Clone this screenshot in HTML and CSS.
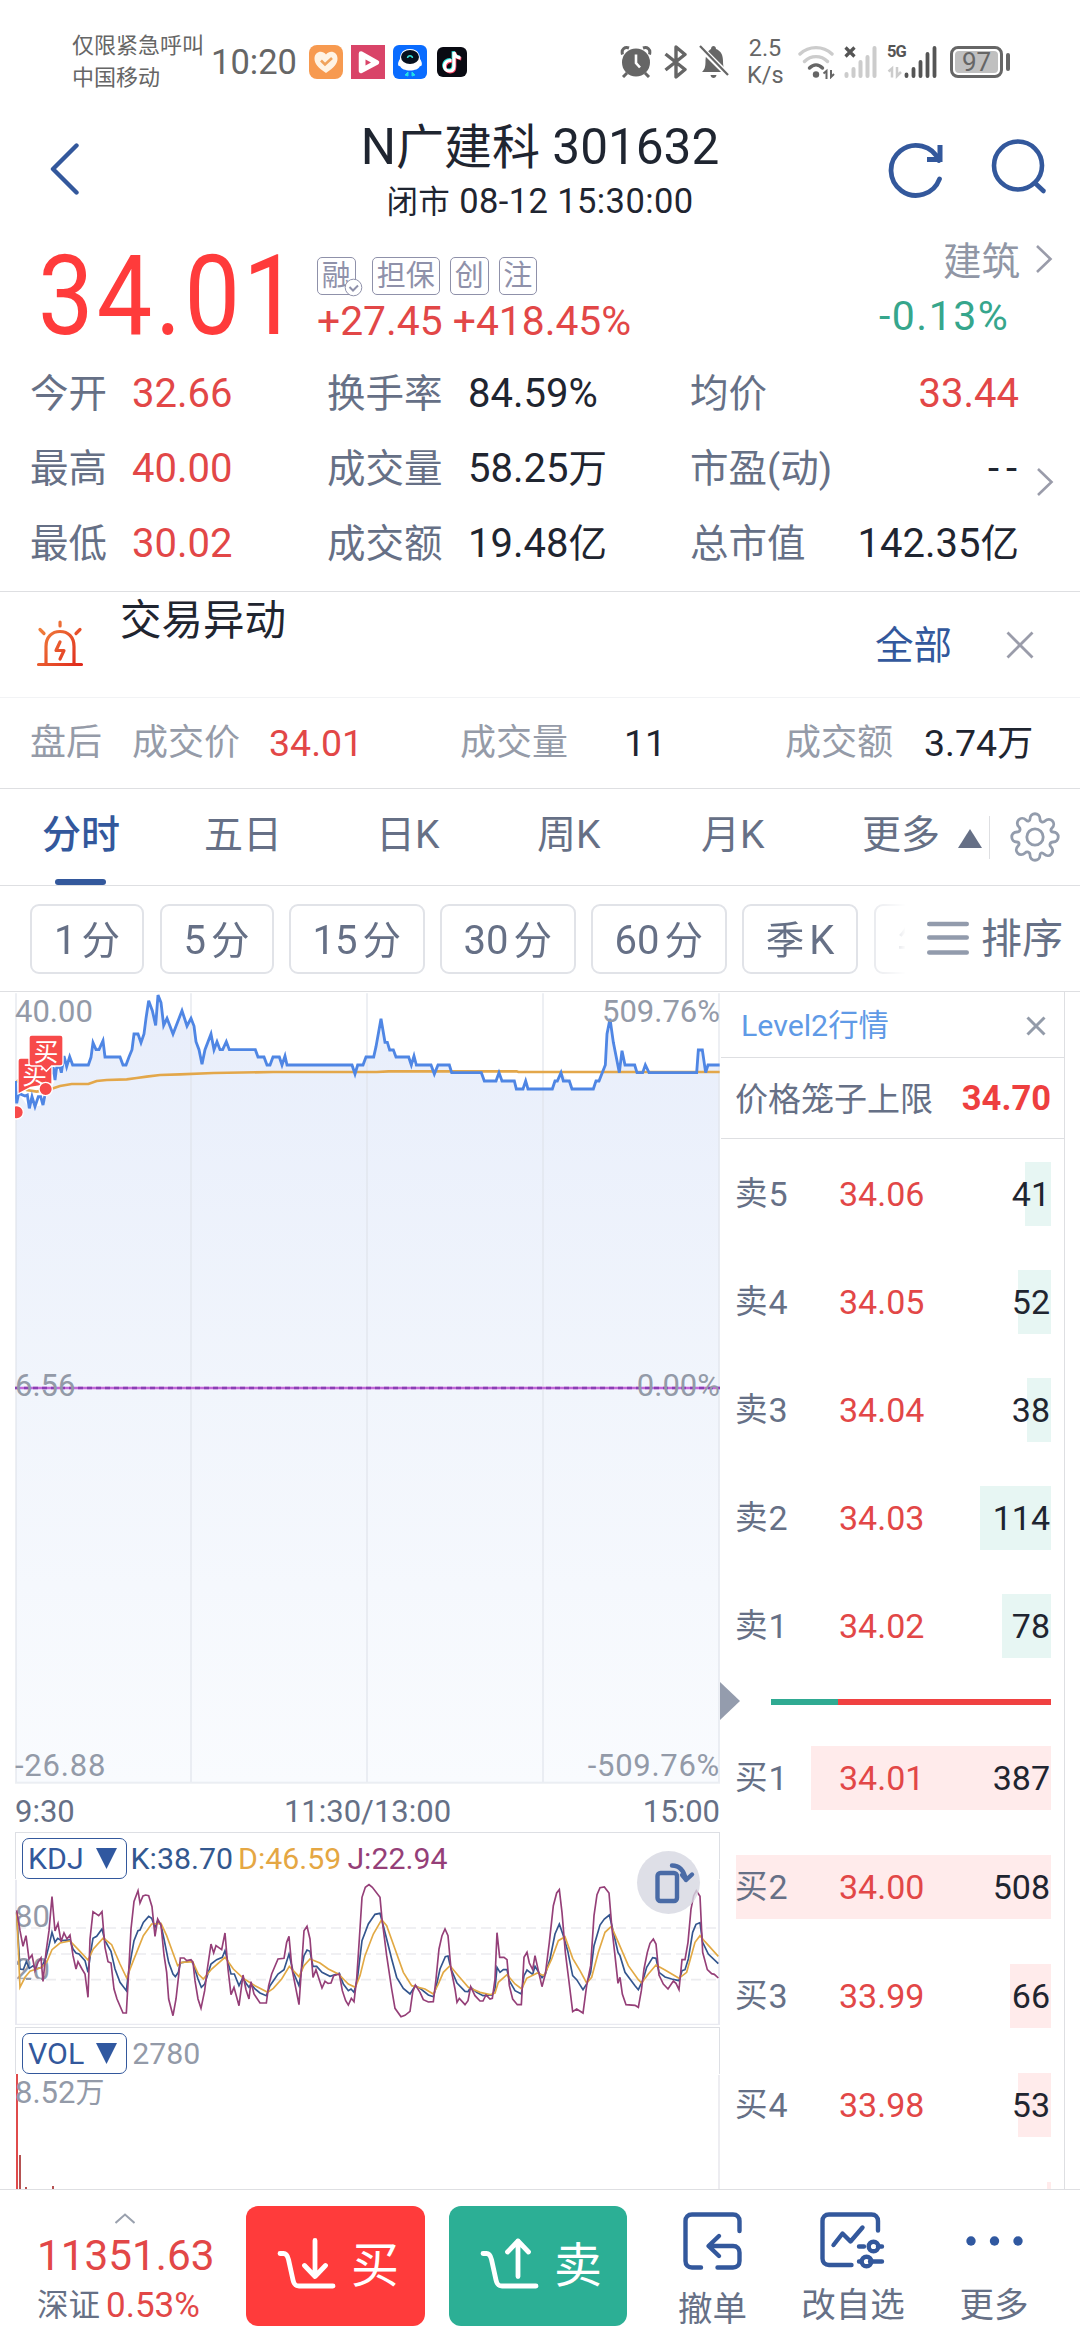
FILE: index.html
```html
<!DOCTYPE html>
<html lang="zh-CN">
<head>
<meta charset="utf-8">
<title>N广建科 301632</title>
<link rel="stylesheet" href="styles.css">
</head>
<body>
<div class="statusbar">
  <div class="carrier"><span>仅限紧急呼叫</span><span>中国移动</span></div>
  <div class="clock">10:20</div>
  <div class="apps">
    <svg width="34" height="34" viewBox="0 0 34 34"><rect width="34" height="34" rx="8" fill="#f79a50"/><path d="M17 28C9 22.500 5.500 19 5.500 13.500 5.500 7 13 4.500 17 9.500 21 4.500 28.500 7 28.500 13.500 28.500 19 25 22.500 17 28Z" fill="#fff3e4"/><path d="M12 15.500l4 4 7-6.500" fill="none" stroke="#f0a35c" stroke-width="2.600"/></svg>
    <svg width="34" height="34" viewBox="0 0 34 34"><rect width="34" height="34" fill="#d94468"/><path d="M10 8.500 26 17.500 10 26Z" fill="#fff" stroke="#fff" stroke-width="4.500" stroke-linejoin="round"/><path d="M14.500 14.500v6l5.500-3Z" fill="#d94468"/></svg>
    <svg width="34" height="34" viewBox="0 0 34 34"><rect width="34" height="34" rx="6" fill="#0a6cff"/><path d="M17 4C26 4 27 11 27 14c3 4 2 8 0 7-2 6-18 6-20 0-2 1-3-3 0-7 0-3 1-10 10-10Z" fill="#fff"/><ellipse cx="17" cy="12" rx="9" ry="7" fill="#06101f"/><path d="M14.500 13c.500-3 4.500-3 5 0" fill="none" stroke="#35e0d8" stroke-width="1.500"/><path d="M12 30l3-3v4zM22 30l-3-3v4z" fill="#20e0e8" stroke="#20e0e8"/></svg>
    <svg class="app-small" width="30" height="30" viewBox="0 0 30 30"><rect width="30" height="30" rx="6" fill="#090a12"/><g fill="none" stroke-width="3.200"><path d="M14.500 13.500c-9-.5-9 11-2 10.500 4 0 4.500-3 4.500-5V5c.5 3.500 3 5.500 6.500 6" stroke="#29e3e0" transform="translate(-.8 -.8)"/><path d="M14.500 13.500c-9-.5-9 11-2 10.500 4 0 4.500-3 4.500-5V5c.5 3.500 3 5.500 6.500 6" stroke="#f33a5a" transform="translate(.8 .8)"/><path d="M14.500 13.500c-9-.5-9 11-2 10.500 4 0 4.500-3 4.500-5V5c.5 3.500 3 5.500 6.500 6" stroke="#fff"/></g></svg>
  </div>
  <div class="indicators">
    <svg width="32" height="32" viewBox="0 0 32 32" fill="#666"><circle cx="16" cy="16.500" r="14"/><path d="M2.500 8.500C1 3 5 .5 9 2M29.500 8.500C31 3 27 .5 23 2M7 27l-4 4M25 27l4 4" stroke="#666" stroke-width="3" fill="none"/><path d="M16 8.500v8.500l4 4.500" fill="none" stroke="#fff" stroke-width="2.600"/></svg>
    <svg width="24" height="34" viewBox="0 0 24 34" fill="none" stroke="#666" stroke-width="3.400" stroke-linejoin="round"><path d="M1.500 9 21 24.500 12 32V2l9 7.500L1.500 25"/></svg>
    <svg width="30" height="34" viewBox="0 0 30 34" fill="#666"><path d="M3 27c3-3 3.500-5 3.500-12C7 8 10 5 12 4c0-4 5-4 5 0 5 2 7 6 7 12 0 6 1 8 3 11Z"/><path d="M11.500 30h6c-.500 4-5.500 4-6 0Z"/><path d="M0 1 29 30" stroke="#fff" stroke-width="5.500"/><path d="M1 1 29 30" stroke="#666" stroke-width="2.200"/></svg>
    <div class="speed"><span>2.5</span><span>K/s</span></div>
    <svg width="38" height="34" viewBox="0 0 38 34" fill="none" stroke-width="3.400" stroke-linecap="round"><path d="M2 9c9-8.500 23-8.500 32 0M6.500 16.500c6.500-6.500 16.500-6.500 23 0" stroke="#ccc"/><path d="M11.500 23c4-4 9-4 13 0" stroke="#666"/><circle cx="18" cy="29.500" r="3.200" fill="#666"/><path d="M25.500 28.500l3-2.500v8M33 25v7l3-3" stroke="#666" stroke-width="2" stroke-linecap="butt"/></svg>
    <svg width="34" height="34" viewBox="0 0 34 34"><g stroke="#ccc" stroke-width="4" stroke-linecap="round"><path d="M2.500 31v-2M9.500 31v-7M16.500 31V17M23.500 31v-19M30.500 31V3"/></g><path d="M1.500 2.500l9 9M10.500 2.500l-9 9" stroke="#555" stroke-width="3.200"/></svg>
    <div class="cell5g"><span class="g5">5G</span><svg width="51" height="34" viewBox="0 0 51 34"><path d="M1.500 26.500l3.500-3v9M10 22v9l4-4" stroke="#ccc" stroke-width="2.500" fill="none"/><path d="M19.500 31v-1.500M26.500 31v-7M33.500 31V17M40.500 31V9M47.500 31V3" stroke="#555" stroke-width="3.800" stroke-linecap="round"/></svg></div>
    <div class="battery"><span>97</span></div>
  </div>
</div>

<header class="header">
  <svg class="back" width="30" height="54" viewBox="0 0 30 54"><path d="M26.500 3.500 3 27l23.500 23.500" fill="none" stroke="#33589c" stroke-width="4.400" stroke-linecap="round" stroke-linejoin="round"/></svg>
  <div class="heading"><h1><span>N</span><b>广建科</b> 301632</h1><p><b>闭市</b> 08-12 15:30:00</p></div>
  <div class="header-actions">
    <svg width="58" height="58" viewBox="0 0 58 58" fill="none" stroke="#33589c" stroke-width="4.800"><path d="M51.500 39A25 25 0 1 1 51 20.500" stroke-linecap="round"/><path d="M52 5v14.500H39" stroke-width="5"/></svg>
    <svg width="60" height="60" viewBox="0 0 60 60" fill="none" stroke="#33589c" stroke-width="4.600" stroke-linecap="round"><circle cx="29" cy="28.500" r="24"/><path d="M46 46l8.500 8"/></svg>
  </div>
</header>

<section class="quote">
  <div class="quote-top">
    <div class="price"><span>34.01</span></div>
    <div class="price-side">
      <div class="tags">
        <span class="tag">融<svg class="tag-check" width="19" height="19" viewBox="0 0 19 19"><circle cx="9.500" cy="9.500" r="8.300" fill="#fff" stroke="#8f91aa"/><path d="M5.500 9l3.500 3.500 5-5" fill="none" stroke="#8f91aa" stroke-width="2"/></svg></span>
        <span class="tag tag-wide">担保</span><span class="tag">创</span><span class="tag">注</span>
      </div>
      <div class="change">+27.45 +418.45%</div>
    </div>
    <div class="sector">
      <div class="sector-name">建筑<svg width="18" height="30" viewBox="0 0 18 30"><path d="M2 2l13.500 13L2 28" fill="none" stroke="#9a9caa" stroke-width="2.600"/></svg></div>
      <div class="sector-change">-0.13%</div>
    </div>
  </div>
  <div class="stats">
    <b>今开</b><span class="up">32.66</span><b>换手率</b><span>84.59%</span><b>均价</b><span class="end up">33.44</span>
    <b>最高</b><span class="up">40.00</span><b>成交量</b><span>58.25<em>万</em></span><b>市盈(动)</b><span class="end dashes">--</span><svg class="stats-more" width="18" height="30" viewBox="0 0 18 30"><path d="M2 2l13.500 13L2 28" fill="none" stroke="#9a9caa" stroke-width="2.600"/></svg>
    <b>最低</b><span class="up">30.02</span><b>成交额</b><span>19.48<em>亿</em></span><b>总市值</b><span class="end">142.35<em>亿</em></span>
  </div>
</section>

<section class="alert">
  <svg width="48" height="48" viewBox="0 0 48 48" fill="none" stroke="url(#siren)" stroke-width="3.200" stroke-linecap="round" stroke-linejoin="round"><defs><linearGradient id="siren" gradientUnits="userSpaceOnUse" x1="4" y1="10" x2="44" y2="46"><stop offset="0" stop-color="#f0803c"/><stop offset="1" stop-color="#e02a1c"/></linearGradient></defs><path d="M2.500 45.500h43M10 45V27.500C10 18 16 12.500 24 12.500S38 18 38 27.500V45"/><path d="M24 23l-4 8.500h8L24 40"/><path d="M4 10.500l4 4M44 10.500l-4 4M24.050 3v4"/></svg>
  <div class="alert-title">交易异动</div>
  <div class="alert-all">全部</div>
  <svg width="28" height="28" viewBox="0 0 28 28"><path d="M1.500 1.500l25 25M26.500 1.500l-25 25" stroke="#9a9caa" stroke-width="2.800"/></svg>
</section>

<section class="after">
  <b>盘后</b><b>成交价</b><span class="up">34.01</span><b>成交量</b><span>11</span><b>成交额</b><span>3.74<em>万</em></span>
</section>

<nav class="tabs">
  <span class="tab active">分时</span><span class="tab">五日</span><span class="tab">日K</span><span class="tab">周K</span><span class="tab">月K</span><span class="tab">更多</span>
  <svg class="tri" width="24" height="19" viewBox="0 0 24 19"><path d="M12 0 24 19H0Z" fill="#667086"/></svg>
  <svg class="gear" width="50" height="50" viewBox="-25 -25 50 50" fill="none" stroke="#939cac" stroke-width="2.800" stroke-linejoin="round"><circle r="8.200"/><path d="M-5-18C-5-25 5-25 5-18 5-15 8-14 10-16 15-21 22-14 17-9 15-7 16-5 18-5 25-5 25 5 18 5 15 5 14 8 16 10 21 15 14 22 9 17 7 15 5 16 5 18 5 25-5 25-5 18-5 15-8 14-10 16-15 21-22 14-17 9-15 7-16 5-18 5-25 5-25-5-18-5-15-5-14-8-16-10-21-15-14-22-9-17-7-15-5-16-5-18Z"/></svg>
</nav>

<div class="periods">
  <div class="pills">
    <span class="pill">1<b>分</b></span><span class="pill">5<b>分</b></span><span class="pill wide">15<b>分</b></span><span class="pill wide">30<b>分</b></span><span class="pill wide">60<b>分</b></span><span class="pill k"><b>季</b>K</span><span class="pill k"><b>年</b>K</span>
  </div>
  <svg width="42" height="36" viewBox="0 0 42 36"><path d="M2.200 3h37.600M2.200 16.500h37.600M2.200 31.500h37.600" stroke="#929bac" stroke-width="4.400" stroke-linecap="round"/></svg>
  <span class="sort">排序</span>
</div>

<main class="body">
  <div class="charts">
    <div class="main-chart">
      <svg width="706" height="792" viewBox="45 36 2118 2376" fill="none">
        <defs><linearGradient id="area" x1="0" y1="0" x2="0" y2="1"><stop offset="0" stop-color="#e8eefb"/><stop offset=".5" stop-color="#f1f5fc"/><stop offset="1" stop-color="#f9fbfe"/></linearGradient></defs>
        <path fill="url(#area)" d="M48 2408V330L88 385 96 350 105 380 129 375 165 300 190 228 218 255 265 255 279 188 297 209 309 182 315 231 360 231 369 255 378 255 396 209 402 162 414 162 423 188 432 162 446 62 467 136 474 45 491 136 501 115 519 162 546 92 561 138 573 115 588 185 606 253 615 209 633 162 642 209 651 185 660 209 668 209 679 185 688 209 766 209 774 231 792 231 801 255 810 255 819 231 838 231 846 255 855 228 861 255 1056 255 1065 282 1073 255 1089 255 1098 231 1121 231 1143 116 1155 187 1169 210 1188 231 1226 231 1234 255 1293 255 1303 282 1314 255 1348 255 1355 278 1444 278 1453 303 1543 303 1549 327 1657 327 1683 278 1708 303 1716 327 1780 327 1797 303 1816 255 1821 162 1830 116 1858 278 1866 212 1875 255 1904 255 1911 278 2090 278 2095 210 2107 210 2117 278 2124 255 2159 255V2408Z"/>
        <path d="M48 40V2408M573 40V2408M1101 40V2408M1629 40V2408M2157 40V2408M45 2408H2160" stroke="#dfe2ea" stroke-opacity=".55" stroke-width="6"/>
        <path stroke="#e3a74a" stroke-width="8" d="M50 300 80 330 110 335 160 325 180 318 215 312 265 312 290 303 320 300 380 298 410 294 440 290 480 285 540 283 640 279 820 276 1130 276 1166 274 1550 274 1555 276 2159 276"/>
        <path stroke="#4f86e4" stroke-width="8.500" stroke-linejoin="miter" d="M47 303 50 370 56 340 75 348 82 345 88 385 96 350 105 380 115 350 122 350 129 375 140 320 160 262 165 300 170 262 180 262 184 278 192 228 200 260 209 230 218 255 265 255 273 232 279 188 288 209 297 209 309 182 315 231 360 231 369 255 378 255 387 231 396 209 402 162 414 162 423 188 432 162 438 115 446 62 457 92 467 136 474 45 483 68 491 136 501 115 519 162 546 92 561 138 573 115 582 138 588 185 597 209 606 253 615 209 633 162 642 209 651 185 660 209 668 209 679 185 688 209 766 209 774 231 792 231 801 255 810 255 819 231 838 231 846 255 855 228 861 255 1056 255 1065 282 1073 255 1089 255 1098 231 1121 231 1128 200 1143 116 1155 187 1162 187 1169 210 1180 210 1188 231 1226 231 1234 255 1242 228 1249 255 1293 255 1303 282 1314 255 1348 255 1355 278 1444 278 1453 303 1488 303 1497 278 1506 303 1543 303 1549 327 1569 327 1577 303 1584 327 1657 327 1665 303 1672 303 1683 278 1690 303 1708 303 1716 327 1780 327 1788 303 1797 303 1816 255 1821 162 1830 116 1840 187 1858 278 1866 212 1875 255 1904 255 1911 278 1928 278 1936 255 1947 278 2090 278 2095 210 2107 210 2117 278 2124 255 2159 255"/>
        <path d="M45 1224H2160" stroke="#c46ad8" stroke-width="7"/>
        <path d="M45 1224H2160" stroke="#8a3fb4" stroke-width="7" stroke-dasharray="15 12"/>
        <g fill="#f74a4a" stroke="#fff" stroke-width="4"><path d="M62 234H148Q156 234 156 242V312L92 322 54 342V242Q54 234 62 234Z"/><text class="marker" x="67" y="313">买</text><path d="M95 165H181Q189 165 189 173V250Q189 258 181 258H155L139 274 123 258H95Q87 258 87 250V173Q87 165 95 165Z"/><text class="marker" x="101" y="242">买</text><circle cx="137" cy="327" r="20"/><circle cx="50" cy="397" r="20"/></g>
      </svg>
      <span class="lbl tl">40.00</span><span class="lbl tr">509.76%</span><span class="lbl ml">6.56</span><span class="lbl mr">0.00%</span><span class="lbl bl">-26.88</span><span class="lbl br">-509.76%</span>
    </div>
    <div class="times"><span>9:30</span><span>11:30/13:00</span><span>15:00</span></div>
    <div class="panel kdj">
      <div class="panel-head"><span class="picker">KDJ<svg width="21" height="21" viewBox="0 0 21 21"><path d="M0 0h21L10.500 21Z" fill="#3058a0"/></svg></span><span class="k-val">K:38.70</span><span class="d-val">D:46.59</span><span class="j-val">J:22.94</span></div>
      <span class="lbl l80">80</span><span class="lbl l20">20</span>
      <svg class="plot" width="706" height="146" viewBox="45 420 2118 438" fill="none" stroke-width="5">
        <path d="M48 567H2160M48 645H2160M48 722H2160" stroke="#ececef" stroke-dasharray="30 15"/>
        <path d="M48 422V857H2157V422" stroke="#e9eaf1" stroke-width="6"/>
        <path stroke="#33558e" d="M50 520 60 690 70 692 79 668 88 688 100 680 108 690 125 685 138 655 147 620 156 580 165 610 173 598 185 605 210 603 219 630 228 642 237 645 255 665 264 700 272 640 279 598 290 592 306 570 315 605 333 637 345 690 360 730 379 755 387 690 402 605 414 575 420 573 430 550 446 532 455 538 465 565 473 545 483 558 492 600 506 670 519 705 526 713 535 700 541 672 573 666 580 675 594 720 604 745 614 735 633 675 650 662 667 655 675 635 693 705 703 705 717 740 729 715 738 733 747 745 753 735 765 750 780 762 799 770 810 740 834 705 852 692 867 645 880 700 897 740 905 690 912 650 921 633 930 637 939 682 950 682 966 700 990 712 1018 703 1030 735 1045 755 1053 750 1062 760 1072 720 1086 605 1105 555 1125 526 1140 523 1146 545 1160 600 1175 660 1190 715 1210 748 1230 765 1246 740 1265 752 1285 768 1300 773 1308 745 1320 690 1336 653 1344 651 1353 690 1371 732 1395 757 1404 758 1412 745 1430 760 1449 770 1477 768 1485 750 1491 685 1500 700 1510 692 1521 692 1528 725 1545 755 1564 765 1572 710 1581 693 1598 706 1605 682 1626 716 1636 705 1650 660 1665 585 1678 555 1690 590 1703 635 1718 710 1730 722 1749 752 1760 735 1772 700 1782 620 1800 558 1813 540 1828 528 1838 570 1854 640 1860 650 1875 700 1905 740 1915 752 1930 720 1940 685 1958 656 1968 658 1977 700 1995 714 2015 720 2037 725 2046 695 2055 692 2065 660 2078 580 2088 556 2100 551 2108 610 2125 645 2155 674"/>
        <path stroke="#e2a944" d="M50 520 60 745 75 715 90 697 125 685 140 670 156 632 180 612 210 606 235 632 264 663 280 630 310 597 335 617 360 675 380 717 400 665 430 590 455 555 483 553 500 590 520 645 533 680 545 670 578 668 595 705 610 720 635 690 675 655 700 690 730 718 765 740 803 760 820 748 845 720 868 682 897 713 912 680 930 660 960 672 985 690 1015 705 1045 735 1066 745 1080 710 1095 650 1120 585 1145 542 1160 560 1185 630 1210 700 1235 740 1246 743 1275 750 1300 765 1315 735 1330 700 1350 680 1375 710 1405 745 1440 760 1470 767 1485 762 1495 730 1521 707 1545 735 1565 750 1580 718 1612 702 1632 710 1655 660 1675 605 1695 593 1718 658 1740 695 1760 732 1775 715 1795 640 1815 580 1834 562 1855 610 1885 680 1915 722 1925 732 1945 705 1968 678 1995 693 2037 718 2060 700 2085 610 2100 590 2115 608 2155 652"/>
        <path stroke="#953f78" d="M50 514 60 575 69 622 78 590 87 660 96 648 105 694 114 670 123 657 129 727 138 640 147 575 156 473 165 576 174 553 183 608 192 582 201 600 210 588 219 650 228 690 234 668 246 690 255 705 264 775 270 600 279 518 296 530 306 518 315 625 324 668 333 672 342 750 351 780 369 822 379 822 387 680 393 570 402 487 414 455 420 492 429 471 437 468 446 470 456 503 465 592 473 540 483 558 492 648 500 700 506 780 519 830 528 780 537 700 541 657 552 657 560 665 573 662 579 670 585 725 594 780 603 808 614 755 622 690 633 615 641 642 648 620 665 632 675 582 684 690 693 767 702 745 717 800 729 708 738 752 747 780 753 728 762 765 780 792 799 792 806 740 815 705 834 660 852 658 860 610 867 592 876 690 897 797 905 680 912 575 921 562 930 600 939 715 948 692 966 747 975 727 984 733 993 732 1001 710 1018 705 1027 755 1037 785 1045 798 1054 778 1062 788 1070 720 1078 600 1086 475 1096 445 1107 437 1117 445 1140 475 1146 540 1160 650 1175 750 1185 808 1203 833 1215 829 1230 817 1238 760 1246 738 1260 760 1270 782 1285 789 1300 788 1308 720 1317 630 1326 590 1335 570 1344 590 1353 690 1365 750 1371 790 1378 778 1395 797 1404 785 1412 743 1425 770 1440 786 1449 786 1458 768 1470 780 1477 778 1485 720 1491 581 1499 655 1512 655 1521 662 1528 740 1538 780 1552 797 1564 797 1572 655 1581 640 1588 672 1598 692 1605 650 1615 695 1626 743 1636 705 1648 610 1660 500 1670 462 1678 452 1686 520 1696 640 1706 720 1718 818 1730 810 1749 822 1760 740 1772 680 1782 530 1791 467 1800 446 1813 444 1827 462 1836 570 1845 650 1854 733 1860 715 1867 765 1878 797 1905 799 1915 805 1924 755 1932 690 1942 640 1950 613 1960 600 1968 615 1977 708 1990 735 2004 750 2020 726 2028 733 2037 752 2046 662 2055 662 2064 610 2073 510 2081 470 2089 455 2100 472 2108 640 2122 692 2135 704 2143 706 2155 717"/>
      </svg>
      <span class="rotate"><svg width="64" height="64" viewBox="0 0 64 64" fill="none" stroke="#4a6ba6" stroke-width="4.400" stroke-linecap="round" stroke-linejoin="round"><rect x="20.500" y="22" width="19.500" height="28" rx="3"/><path d="M35 14.500c8 0 12 5 14 14.500M45 24l4 5 6-5.500"/></svg></span>
    </div>
    <div class="panel vol">
      <div class="panel-head"><span class="picker">VOL<svg width="21" height="21" viewBox="0 0 21 21"><path d="M0 0h21L10.500 21Z" fill="#3058a0"/></svg></span><span class="v-val">2780</span></div>
      <svg width="706" height="115" viewBox="15 2075 706 115"><path d="M719 2076V2190" stroke="#ededf1" stroke-width="2"/><path d="M17 2075V2190" stroke="#df4b4b" stroke-width="2"/><path d="M20 2156V2190M26 2188V2190M53 2187V2190" stroke="#b55252" stroke-width="2"/></svg>
      <span class="lbl lv">8.52<em>万</em></span>
    </div>
  </div>
  <svg class="handle" width="20" height="38" viewBox="0 0 20 38"><path d="M0 0 20 19 0 38Z" fill="#949cad"/></svg>
  <aside class="book">
    <div class="book-title">Level2行情<svg width="20" height="20" viewBox="0 0 20 20"><path d="M1.500 1.500l17 17M18.500 1.500l-17 17" stroke="#939ba9" stroke-width="3"/></svg></div>
    <div class="cage"><b>价格笼子上限</b><strong>34.70</strong></div>
    <div class="sells">
      <div class="row"><u class="depth" style="width:25.500px"></u><b>卖<i>5</i></b><span>34.06</span><em>41</em></div>
      <div class="row"><u class="depth" style="width:32.500px"></u><b>卖<i>4</i></b><span>34.05</span><em>52</em></div>
      <div class="row"><u class="depth" style="width:24px"></u><b>卖<i>3</i></b><span>34.04</span><em>38</em></div>
      <div class="row"><u class="depth" style="width:71px"></u><b>卖<i>2</i></b><span>34.03</span><em>114</em></div>
      <div class="row"><u class="depth" style="width:48.500px"></u><b>卖<i>1</i></b><span>34.02</span><em>78</em></div>
    </div>
    <div class="ratio"><i style="width:67px"></i></div>
    <div class="buys">
      <div class="row"><u class="depth" style="width:240px"></u><b>买<i>1</i></b><span>34.01</span><em>387</em></div>
      <div class="row"><u class="depth" style="width:315px"></u><b>买<i>2</i></b><span>34.00</span><em>508</em></div>
      <div class="row"><u class="depth" style="width:41px"></u><b>买<i>3</i></b><span>33.99</span><em>66</em></div>
      <div class="row"><u class="depth" style="width:33px"></u><b>买<i>4</i></b><span>33.98</span><em>53</em></div>
      <div class="row"><u class="depth" style="width:4px"></u></div>
    </div>
  </aside>
</main>

<footer class="bar">
  <div class="index">
    <svg width="20" height="11" viewBox="0 0 20 11"><path d="M.5 10 10 1.500 19.500 10" fill="none" stroke="#9aa1ae" stroke-width="2"/></svg>
    <div class="index-value">11351.63</div>
    <div class="index-name"><b>深证</b><span>0.53%</span></div>
  </div>
  <div class="trade buy"><svg width="60" height="56" viewBox="0 0 60 56" fill="none" stroke="#fff" stroke-width="4.800" stroke-linecap="round" stroke-linejoin="round"><path d="M3 15.500h3.500c3 0 4 2 5 6L16 42c1 4.500 2.500 6 6 6h34M38 2.500v35M27.500 27.500 38 38.500l10.500-11"/></svg>买</div>
  <div class="trade sell"><svg width="60" height="56" viewBox="0 0 60 56" fill="none" stroke="#fff" stroke-width="4.800" stroke-linecap="round" stroke-linejoin="round"><path d="M3 15.500h3.500c3 0 4 2 5 6L16 42c1 4.500 2.500 6 6 6h34M38 38.500V3M27.500 14 38 3l10.500 11"/></svg>卖</div>
  <div class="action cancel"><svg width="60" height="58" viewBox="0 0 60 58" fill="none" stroke="#33589c" stroke-width="4.400" stroke-linecap="round" stroke-linejoin="round"><path d="M18 55.500H9c-4 0-6.500-2.500-6.500-6.500V9c0-4 2.500-6.500 6.500-6.500h41c4 0 6.500 2.500 6.500 6.500v10M36 24 25.500 34 36 44M26 34h24c4 0 6.500 2.500 6.500 6.500V49c0 4-2.500 6.500-6.500 6.500H34.500"/></svg>撤单</div>
  <div class="action edit"><svg width="66" height="58" viewBox="0 0 66 58" fill="none" stroke="#33589c" stroke-width="4.400" stroke-linecap="round" stroke-linejoin="round"><path d="M31.500 53H9c-4 0-6.500-2.500-6.500-6.500V9c0-4 2.500-6.500 6.500-6.500h42.500c4 0 6.500 2.500 6.500 6.500v9.500M13.500 33l9-11.500 8 8 12-14M39 34.500h5M58 34.500h4M39 49.500h1M50 49.500h12"/><circle cx="53.500" cy="34.500" r="4.800"/><circle cx="46.500" cy="49.500" r="4.800"/></svg>改自选</div>
  <div class="action more"><svg width="60" height="58" viewBox="0 0 60 58" fill="#3058a0"><circle cx="7" cy="29" r="4.700"/><circle cx="30.500" cy="29" r="4.700"/><circle cx="54" cy="29" r="4.700"/></svg>更多</div>
</footer>
</body>
</html>
```
FILE: styles.css
```css
* { box-sizing: border-box; margin: 0; padding: 0; }
html, body { width: 1080px; height: 2340px; overflow: hidden; }
body { background: #fff; color: #1f2530; font-family: Roboto, "Noto Sans CJK SC", sans-serif; font-weight: 400; }
b, em, i, u { font-weight: 400; font-style: normal; text-decoration: none; }
svg { display: block; flex: none; }
.up { color: #e24747; }

.statusbar { height: 119px; padding: 4px 70px 0 72px; display: flex; align-items: center; color: #666; }
.carrier { display: flex; flex-direction: column; width: 138px; font-size: 22px; line-height: 31.500px; }
.clock { width: 98px; padding-left: 1px; font-size: 34.500px; line-height: 40px; }
.apps { display: flex; align-items: center; gap: 8px; margin-left: 1px; }
.app-small { margin-left: 2px; }
.indicators { margin-left: auto; display: grid; grid-template-columns: 44px 35px 48px 51px 46px 43px 63px 60px; align-items: center; }
.speed { display: flex; flex-direction: column; width: 36px; font-size: 23.500px; line-height: 27px; text-align: center; }
.cell5g { position: relative; }
.g5 { position: absolute; left: 0; top: 0; font-size: 16.500px; line-height: 14px; font-weight: 700; color: #555; letter-spacing: -1px; }
.battery { position: relative; width: 53px; height: 32px; border: 3px solid #666; border-radius: 8px; padding: 2px; }
.battery::after { content: ""; position: absolute; right: -10px; top: 4px; width: 4px; height: 18px; background: #666; border-radius: 2px; }
.battery span { display: block; height: 22px; border-radius: 4px; background: #c0c0c0; text-align: center; font-size: 26px; line-height: 23px; }

.header { height: 121px; display: grid; grid-template-columns: 180px 720px 180px; }
.back { margin: 23px 0 0 50px; }
.heading { text-align: center; }
.heading h1 { font-size: 49.500px; font-weight: 400; line-height: 56px; white-space: pre; }
.heading h1 b { font-size: 48px; }
.heading p { margin-top: 5px; font-size: 34.500px; line-height: 40px; letter-spacing: .4px; white-space: pre; }
.heading p b { font-size: 31.500px; }
.header-actions { display: flex; gap: 43px; margin: 18px 0 0 -12px; }
.header-actions svg:first-child { margin-top: 3px; }

.quote { height: 352px; border-bottom: 1px solid #dedfe2; }
.quote-top { height: 116px; display: grid; grid-template-columns: 316px 561px 1fr; }
.price { padding-left: 38px; color: #ff3b3b; font-size: 111px; line-height: 112px; }
.price span { display: inline-block; letter-spacing: 3.500px; transform: scaleX(.89); transform-origin: left; }
.tags { display: flex; gap: 10px; margin: 17px 0 0 1px; color: #8f91aa; }
.tag { position: relative; width: 38.500px; height: 38px; border: 1.500px solid #8f91aa; border-radius: 5px; text-align: center; font-size: 29px; line-height: 37px; }
.tag:first-child { margin-right: 6px; }
.tag-wide { width: 68.500px; }
.tag-check { position: absolute; left: 26px; top: 20px; }
.change { margin-top: 6px; padding-left: 1px; color: #e24747; font-size: 40.800px; line-height: 41px; white-space: nowrap; }
.sector-name { display: flex; align-items: center; justify-content: space-between; padding: 0 27px 0 66px; color: #9096a5; font-size: 38.500px; line-height: 43px; }
.sector-name svg { margin-top: -5px; }
.sector-change { margin-top: 12px; padding-left: 2px; color: #36a68c; font-size: 41px; line-height: 42px; letter-spacing: 1.500px; }
.stats { display: grid; grid-template-columns: 102px 195px 141px 222px 150px 179px 17px 18px; grid-template-rows: repeat(3, 75px); padding-left: 30px; align-items: center; font-size: 40px; line-height: 50px; white-space: nowrap; }
.stats b { color: #667086; font-size: 38.500px; }
.stats em { font-size: 38.500px; }
.stats .end { text-align: right; }
.stats .dashes { letter-spacing: 7px; margin-right: -5px; }
.stats b:nth-of-type(3n+1) { grid-column: 1; }
.stats-more { grid-column: 8; margin-top: 27px; }

.alert { height: 106px; border-bottom: 1px solid #f2f3f5; display: grid; grid-template-columns: 84px 755px 131px 28px; align-items: center; padding-left: 36px; }
.alert svg:first-child { margin-top: -3px; }
.alert-title { align-self: start; font-size: 41.500px; line-height: 57px; }
.alert-all { color: #33589c; font-size: 38.500px; line-height: 50px; padding-top: 3px; }
.after { height: 91px; border-bottom: 1px solid #dedfe2; display: grid; grid-template-columns: 102px 137px 191px 164px 161px 139px 1fr; align-items: center; padding-left: 30px; font-size: 37.500px; line-height: 48px; white-space: nowrap; }
.after b { color: #959ba8; font-size: 36px; }
.after em { font-size: 36px; }

.tabs { height: 97px; border-bottom: 1px solid #dedfe2; display: grid; grid-template-columns: 162px 172px 161px 164px 161px 96px 31px 21px; padding-left: 42px; align-items: stretch; color: #667086; font-size: 39px; line-height: 93px; }
.tab { position: relative; }
.active { color: #33589c; font-weight: 500; }
.active::after { content: ""; position: absolute; left: 13px; bottom: 0; width: 51px; height: 6.500px; border-radius: 4px; background: #33589c; }
.tri { margin-top: 40px; }
.gear { margin: 23px 0 0 21px; }
.tabs::after { content: ""; grid-column: 8; grid-row: 1; width: 1px; height: 43px; margin-top: 27px; background: #dedfe2; }
.tabs .gear { grid-column: 8; grid-row: 1; }

.periods { height: 106px; border-bottom: 1px solid #dedfe2; display: flex; align-items: center; padding-left: 30px; color: #667086; }
.pills { display: flex; gap: 15.500px; width: 875px; margin-right: 22px; overflow: hidden; -webkit-mask-image: linear-gradient(to right, #000 830px, transparent 876px); mask-image: linear-gradient(to right, #000 830px, transparent 876px); }
.pill { flex: none; width: 114px; height: 70px; border: 2px solid #e1e3e8; border-radius: 9px; display: flex; justify-content: center; gap: 5px; font-size: 40px; line-height: 69px; }
.pill b { font-size: 38.500px; }
.pill.wide { width: 135.500px; }
.pill.k { width: 116px; }
.sort { margin-left: 12px; font-size: 41px; line-height: 60px; }

.body { position: relative; height: 1198px; display: grid; grid-template-columns: 706px 344px; padding-left: 15px; overflow: hidden; border-bottom: 1px solid #dedfe2; }
.main-chart { position: relative; height: 792px; }
.lbl { position: absolute; font-size: 31px; line-height: 36px; color: #939aa8; }
.lbl em { font-size: 29px; }
.tl { left: 0; top: 2px; }
.tr { right: 1px; top: 2px; }
.ml { left: 0; top: 376px; }
.mr { right: 1px; top: 376px; }
.bl { left: 0; top: 756px; letter-spacing: .8px; }
.br { right: 1px; top: 756px; letter-spacing: .7px; }
.marker { font-size: 74px; fill: #fff; stroke: none; }
.times { height: 48px; padding: 7px 1px 0 0; display: grid; grid-template-columns: 1fr auto 1fr; align-items: center; font-size: 31px; line-height: 36px; color: #667086; }
.times span:last-child { text-align: right; }
.panel { position: relative; width: 705px; }
.panel-head { height: 47px; display: flex; align-items: center; padding: 5px 0 0 6px; font-size: 30.300px; line-height: 36px; border: 1px solid #dddfe4; border-width: 1px 1px 0; }
.picker { height: 41px; border: 1.500px solid #33589c; border-radius: 7px; display: flex; align-items: center; gap: 12px; padding: 0 9px 0 5px; color: #33589c; }
.k-val { margin-left: 4px; color: #33588f; }
.d-val { margin-left: 5px; color: #e5a743; }
.j-val { margin-left: 6px; color: #953f78; }
.v-val { margin-left: 5px; color: #939aa8; }
.kdj { height: 194px; }
.plot { position: relative; }
.l80 { left: 0; top: 67px; }
.l20 { left: 0; top: 120px; }
.rotate { position: absolute; left: 622px; top: 18.500px; width: 63px; height: 63px; border-radius: 50%; background: rgba(214, 215, 225, .8); }
.vol { height: 164px; margin-top: 1px; }
.lv { left: 0; top: 47.500px; }
.handle { position: absolute; left: 720px; top: 690px; }

.book { border-right: 1px solid #dedfe2; }
.book-title { height: 66px; border-bottom: 1px solid #dedfe2; display: flex; justify-content: space-between; align-items: center; padding: 2px 18px 0 20px; color: #5f9ae6; font-size: 30.300px; line-height: 40px; }
.cage { height: 81px; border-bottom: 1px solid #dedfe2; display: flex; justify-content: space-between; align-items: center; padding: 0 13px 0 14px; color: #667086; font-size: 33px; line-height: 44px; }
.cage b { padding-top: 3px; }
.cage strong { color: #ee3f3f; font-size: 34.500px; font-weight: 700; }
.sells { padding-top: 1px; }
.row { position: relative; height: 108px; display: grid; grid-template-columns: 104px 1fr auto; align-items: center; padding: 0 14px; font-size: 34px; line-height: 44px; }
.row b { position: relative; display: flex; gap: 1px; color: #667086; font-size: 32.500px; }
.row b i { font-size: 34px; }
.row span { position: relative; color: #e24747; }
.row em { position: relative; }
.depth { position: absolute; right: 13.500px; top: 21.500px; height: 64px; background: #e7f6f3; }
.ratio { height: 6px; margin: 19px 13.500px 0 50px; background: #f04141; }
.ratio i { display: block; height: 6px; background: #2faa92; }
.buys { padding-top: 18.500px; }
.buys .row { height: 109px; }
.buys .depth { top: 22.500px; background: #ffebeb; }

.bar { height: 150px; display: grid; grid-template-columns: 246px 179px 24px 178px 169px 114px 168px; background: #fff; }
.index { padding: 23px 0 0 37px; }
.index svg { margin-left: 78px; }
.index-value { margin-top: 7px; color: #e24747; font-size: 42.300px; line-height: 50px; }
.index-name { display: flex; font-size: 35px; line-height: 44px; margin-top: 3px; }
.index-name b { color: #667086; font-size: 31.500px; width: 69px; }
.index-name span { color: #e24747; }
.trade { height: 120px; margin-top: 16px; border-radius: 12px; display: flex; align-items: center; color: #fff; font-size: 48px; line-height: 120px; padding-left: 31px; gap: 14px; }
.trade svg { margin-top: -1px; }
.buy { background: #ff3b3b; }
.sell { grid-column: 4; background: #2caf95; }
.action { color: #667086; font-size: 34.500px; line-height: 44px; display: flex; flex-direction: column; align-items: center; padding-top: 22px; }
.cancel { grid-column: 5; padding-left: 2px; gap: 17px; }
.edit { grid-column: 6; gap: 13px; }
.more { grid-column: 7; gap: 13px; }
```
